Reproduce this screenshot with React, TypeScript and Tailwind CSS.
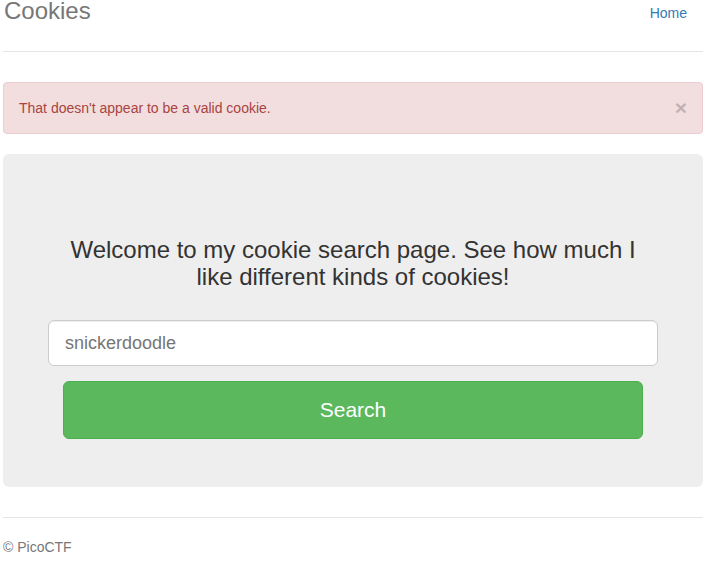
import React from "react";

export default function App() {
  return (
    <div className="min-h-screen bg-white px-[3px] font-['Liberation_Sans',Arial,sans-serif] text-[14px] text-[#333]">
      <div className="w-[700px]">
        <div className="flex items-start justify-between border-b border-[#e5e5e5] pb-[27px]">
          <h3 className="-mt-[2px] pl-[1px] text-[24px] leading-[26px] text-[#777]">Cookies</h3>
          <a href="#" className="mr-[16px] mt-[3px] leading-[20px] text-[#337ab7]">
            Home
          </a>
        </div>

        <div className="mt-[30px] flex items-center justify-between rounded-[4px] border border-[#ebccd1] bg-[#f2dede] py-[15px] pl-[15px] pr-[15px] leading-[20px] text-[#a94442]">
          <span>That doesn't appear to be a valid cookie.</span>
          <button className="text-[21px] font-bold leading-[20px] text-black opacity-20">×</button>
        </div>

        <div className="mt-[20px] flex flex-col items-center rounded-[6px] bg-[#eeeeee] pb-[48px] pt-[82px]">
          <h3 className="w-[590px] text-center text-[24px] leading-[27px] text-[#333]">
            Welcome to my cookie search page. See how much I like different kinds of cookies!
          </h3>
          <input
            type="text"
            placeholder="snickerdoodle"
            className="mt-[30px] h-[46px] w-[610px] rounded-[6px] border border-[#ccc] bg-white px-[16px] text-[18px] text-[#555] shadow-[inset_0_1px_1px_rgba(0,0,0,0.075)] outline-none placeholder:text-[#757575]"
          />
          <button className="mt-[15px] h-[58px] w-[580px] rounded-[6px] border border-[#4cae4c] bg-[#5cb85c] text-[21px] text-white">
            Search
          </button>
        </div>

        <div className="mt-[30px] border-t border-[#e5e5e5] pt-[19px] leading-[20px] text-[#777]">
          © PicoCTF
        </div>
      </div>
    </div>
  );
}
